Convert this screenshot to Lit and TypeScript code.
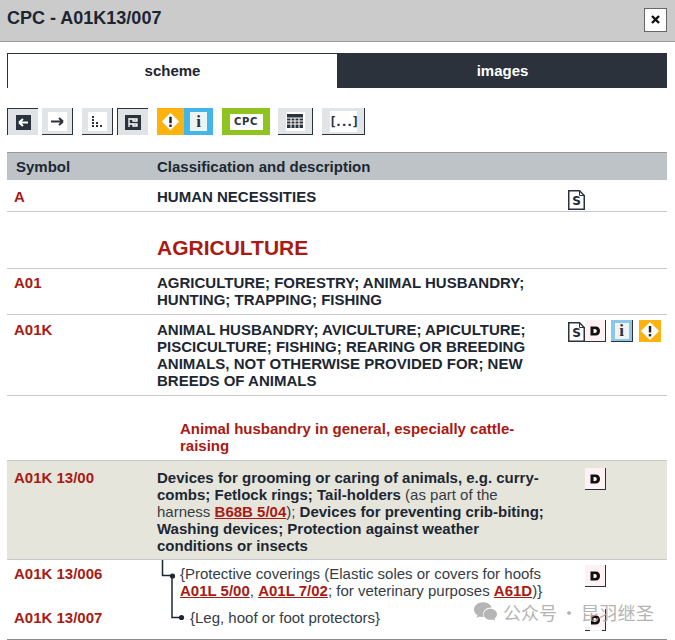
import { LitElement, html, css, svg } from "lit";
import { customElement } from "lit/decorators.js";

const docIcon = (letter: string) => html`<span class="doc"><svg class="docbg" width="17" height="20" viewBox="0 0 17 20"><path d="M.75.75H11.500L16.250 5.500V19.250H.75Z" fill="#fff" stroke="#2b323c" stroke-width="1.500"/><path d="M11.500 1V5.500H16" fill="none" stroke="#2b323c"/></svg><b>${letter}</b></span>`;
const dIcon = () => html`<span class="dbtn"><svg width="12" height="12" viewBox="0 0 12 12"><path fill-rule="evenodd" d="M1.500 1.500H6.500C9.500 1.500 11 3.500 11 6S9.500 10.500 6.500 10.500H1.500ZM4.500 4V8H6C7.300 8 7.800 7 7.800 6S7.300 4 6 4Z" fill="#111"/></svg></span>`;
const infoIcon = () => html`<span class="mini info"><span class="mini-in">i</span></span>`;
const warnIcon = () => html`<span class="mini warn"><svg width="22" height="22" viewBox="0 0 22 22"><path d="M11 2L20 11L11 20L2 11Z" fill="#fff"/><rect x="9.800" y="6" width="2.400" height="6.500" fill="#222"/><rect x="9.800" y="14" width="2.400" height="2.400" fill="#222"/></svg></span>`;

@customElement("app-root")
export class AppRoot extends LitElement {
  static styles = css`
    :host { display: block; width: 675px; height: 640px; overflow: hidden; position: relative; background: #fff;
      font-family: "Liberation Sans", Arial, sans-serif; color: #1c2733; }
    .head { height: 41px; background: #cbcbcb; border-bottom: 1px solid #9a9a9a;
      display: flex; align-items: center; justify-content: space-between; padding: 0 8px 0 7px; }
    .title { font-size: 18px; font-weight: bold; color: #1c2530; position: relative; top: -2px; }
    .close { width: 21px; height: 22px; background: #fff; border: 1px solid #666; display: flex; align-items: center;
      justify-content: center; position: relative; top: -1px; }
    .tabs { display: flex; margin: 11px 8px 0 7px; height: 35px; }
    .tab { flex: 1; display: flex; align-items: center; justify-content: center; font-size: 15px; font-weight: bold; }
    .tab.on { background: #fff; border: 1px solid #2b323c; border-bottom: 0; color: #1c2530; padding-bottom: 2px; }
    .tab.off { background: #2b323c; color: #fff; }
    .tools { display: flex; margin: 20px 0 0 7px; height: 27px; }
    .btn { box-sizing: border-box; height: 27px; background: #e2e5e8; display: flex; align-items: center; justify-content: center;
      border-right: 1px solid #2b323c; border-bottom: 1px solid #2b323c; }
    .btn.active { border: 0; border-top: 1px solid #2b323c; border-left: 1px solid #2b323c; background: #dfe3e6; }
    .w31 { width: 31px; }
    .m4 { margin-left: 4px; } .m9 { margin-left: 9px; } .m8 { margin-left: 8px; }
    .plate { width: 19px; height: 19px; background: #fff; display: flex; align-items: center; justify-content: center; }
    .pair { display: flex; width: 56px; height: 27px; }
    .pair .o { width: 27px; background: #fdb30f; display: flex; align-items: center; justify-content: center; }
    .pair .c { width: 29px; background: #42b6e6; display: flex; align-items: center; justify-content: center; }
    .ibox { width: 17px; height: 19px; background: #eef3f5; display: flex; align-items: center; justify-content: center;
      font: bold 17px "Liberation Serif", serif; color: #2b323c; }
    .cpc { width: 48px; height: 27px; background: #8fc31f; display: flex; align-items: center; justify-content: center; }
    .cpc span { background: #fff; width: 33px; height: 16px; display: flex; align-items: center; justify-content: center;
      font: bold 10px "DejaVu Sans", sans-serif; color: #2b323c; letter-spacing: .6px; }
    .w35 { width: 35px; } .w43 { width: 43px; }
    .dots { width: 27px; height: 21px; background: #fff; display: flex; align-items: center; justify-content: center;
      font: bold 13px "DejaVu Sans Mono", monospace; color: #2b323c; letter-spacing: -2.200px; }

    .table { margin: 17px 8px 0 7px; }
    .thead { display: grid; grid-template-columns: 150px 1fr; height: 27px; background: #bdc3c7; border-top: 1px solid #9a9a9a;
      align-items: center; font-size: 15px; font-weight: bold; color: #1c2733; }
    .thead span:first-child { padding-left: 9px; }
    .row { display: grid; grid-template-columns: 150px 411px 1fr; border-bottom: 1px solid #c9c9c9; font-size: 15px; line-height: 17px; box-sizing: border-box; }
    .sym { padding-left: 7px; color: #a81a12; font-weight: bold; }
    .desc { color: #1c2733; }
    .b { font-weight: bold; }
    .icons { display: flex; }
    .r-a { height: 32px; padding-top: 8px; }
    .r-a .icons { padding-top: 2px; }
    .r-agri { height: 57px; align-items: start; }
    .r-agri .desc { grid-column: 2 / 4; color: #a81a12; font-size: 21px; font-weight: bold; line-height: 24px; padding-top: 24px; }
    .r-a01 { height: 46px; padding-top: 5px; }
    .r-a01k { height: 81px; padding-top: 6px; }
    .r-a01k .icons { margin-top: -1px; align-items: flex-start; }
    .r-a01k .doc { margin-top: 2px; }
    .r-ah { height: 65px; display: block; padding: 24px 0 0 173px; color: #a81a12; font-weight: bold; font-size: 15px; }
    .r-1300 { height: 99px; padding-top: 8px; background: #e6e5dc; }
    .r-1300 .icons, .r-6 .icons, .r-7 .icons { padding-left: 17px; }
    .r-1300 .icons { margin-top: -1px; }
    .r-6 { height: 46px; padding-top: 5px; border-bottom: 0; }
    .r-7 { height: 34px; padding-top: 3px; border-bottom: 1px solid #8c8c8c; }
    .r-6 .desc { padding-left: 23px; }
    .r-7 .desc { padding-left: 33px; }
    .normal { font-weight: normal; color: #363c44; }
    a { color: #a81a12; font-weight: bold; text-decoration: underline; }

    .doc { position: relative; width: 17px; height: 20px; display: flex; align-items: center; justify-content: center;
      font: bold 12px "DejaVu Sans", sans-serif; color: #1c2733; }
    .docbg { position: absolute; left: 0; top: 0; }
    .doc b { position: relative; top: 1px; }
    .dbtn { box-sizing: border-box; width: 21px; height: 22px; background: #fdf1f4; border-right: 1px solid #2b323c; border-bottom: 1px solid #2b323c;
      display: flex; align-items: center; justify-content: center; }
    .mini { box-sizing: border-box; width: 22px; height: 22px; display: flex; align-items: center; justify-content: center; margin-left: 5px; }
    .mini.info { background: #8dc6e6; border-right: 1px solid #2b323c; border-bottom: 1px solid #2b323c; }
    .mini-in { width: 14px; height: 16px; background: #eef3f5; font: bold 17px "Liberation Serif", serif; color: #2b323c; display: flex; align-items: center; justify-content: center; }
    .mini.warn { background: #fdb30f; margin-left: 6px; }
    .lines { position: absolute; left: 155px; top: 560px; }
    .wash { position: absolute; background: rgba(255,255,255,.92); }
    .wash.w1 { left: 584px; top: 606px; width: 7px; height: 21px; }
    .wash.w2 { left: 590px; top: 606px; width: 15px; height: 7px; }
    .wash.w3 { left: 590px; top: 627px; width: 12px; height: 5px; }
    .mark { position: absolute; left: 474px; top: 601px; height: 22px; display: flex; align-items: center; font-size: 18px; line-height: 18px;
      color: rgba(165,165,165,.85); font-family: "Noto Sans CJK SC", sans-serif; white-space: nowrap; }
    .mark svg { margin-right: 6px; }
    .mark .dot { width: 24px; text-align: center; }
    .mark .name { letter-spacing: .3px; }
  `;

  render() {
    const dline = svg`<path d="M7.500 0V15.500H17M17 15.500V57.500H26" fill="none" stroke="#1c2733" stroke-width="1.500"/><circle cx="17.500" cy="16" r="2.600" fill="#1c2733"/><circle cx="26.500" cy="57.500" r="2.600" fill="#1c2733"/>`;
    return html`
      <div class="head">
        <div class="title">CPC - A01K13/007</div>
        <div class="close"><svg width="11" height="11" viewBox="0 0 11 11"><path d="M2 2L9 9M9 2L2 9" stroke="#111" stroke-width="2.400"/></svg></div>
      </div>
      <div class="tabs">
        <div class="tab on">scheme</div>
        <div class="tab off">images</div>
      </div>
      <div class="tools">
        <div class="btn active w31"><svg width="15" height="15" viewBox="0 0 15 15"><rect width="15" height="15" fill="#2b323c"/><path d="M3 7.500H12M3 7.500L7 4M3 7.500L7 11" stroke="#fff" stroke-width="2" fill="none"/></svg></div>
        <div class="btn w31 m4"><div class="plate"><svg width="15" height="11" viewBox="0 0 15 11"><path d="M1 5.500H13M13 5.500L9 2M13 5.500L9 9" stroke="#2b323c" stroke-width="2" fill="none"/></svg></div></div>
        <div class="btn w31 m9"><div class="plate"><svg width="13" height="11" viewBox="0 0 13 11" fill="#2b323c"><rect x="1" y="0" width="2" height="2"/><rect x="1" y="3" width="2" height="2"/><rect x="1" y="6" width="2" height="2"/><rect x="1" y="9" width="2" height="2"/><rect x="5" y="6" width="2" height="2"/><rect x="5" y="9" width="2" height="2"/><rect x="9" y="9" width="2" height="2"/></svg></div></div>
        <div class="btn active w31 m4"><svg width="16" height="15" viewBox="0 0 16 15"><rect width="16" height="15" fill="#2b323c"/><path d="M4 3V12M4 4H8V6H12V4H8M4 9H8V11H12V9H8" stroke="#fff" stroke-width="1.300" fill="none"/></svg></div>
        <div class="pair m9">
          <div class="o"><svg width="19" height="19" viewBox="0 0 22 22"><path d="M11 1L21 11L11 21L1 11Z" fill="#fff"/><rect x="9.600" y="5.500" width="2.800" height="7.500" fill="#222"/><rect x="9.600" y="14.500" width="2.800" height="2.800" fill="#222"/></svg></div>
          <div class="c"><div class="ibox">i</div></div>
        </div>
        <div class="cpc m9"><span>CPC</span></div>
        <div class="btn w35 m8"><div class="plate"><svg width="16" height="14" viewBox="0 0 16 14"><rect width="16" height="14" fill="#2b323c"/><path d="M0 4H16M0 7H16M0 10H16M4 4V14M8 4V14M12 4V14" stroke="#fff" stroke-width="1" fill="none"/></svg></div></div>
        <div class="btn w43 m9"><div class="dots">[...]</div></div>
      </div>
      <div class="table">
        <div class="thead"><span>Symbol</span><span>Classification and description</span></div>
        <div class="row r-a"><div class="sym">A</div><div class="desc b">HUMAN NECESSITIES</div><div class="icons">${docIcon("S")}</div></div>
        <div class="row r-agri"><div></div><div class="desc">AGRICULTURE</div></div>
        <div class="row r-a01"><div class="sym">A01</div><div class="desc b">AGRICULTURE; FORESTRY; ANIMAL HUSBANDRY;<br>HUNTING; TRAPPING; FISHING</div><div></div></div>
        <div class="row r-a01k"><div class="sym">A01K</div><div class="desc b">ANIMAL HUSBANDRY; AVICULTURE; APICULTURE;<br>PISCICULTURE; FISHING; REARING OR BREEDING<br>ANIMALS, NOT OTHERWISE PROVIDED FOR; NEW<br>BREEDS OF ANIMALS</div><div class="icons">${docIcon("S")}${dIcon()}${infoIcon()}${warnIcon()}</div></div>
        <div class="row r-ah">Animal husbandry in general, especially cattle-<br>raising</div>
        <div class="row r-1300"><div class="sym">A01K 13/00</div><div class="desc b">Devices for grooming or caring of animals, e.g. curry-<br>combs; Fetlock rings; Tail-holders <span class="normal">(as part of the<br>harness <a>B68B 5/04</a>);</span> Devices for preventing crib-biting;<br>Washing devices; Protection against weather<br>conditions or insects</div><div class="icons">${dIcon()}</div></div>
        <div class="row r-6"><div class="sym">A01K 13/006</div><div class="desc normal">{Protective coverings (Elastic soles or covers for hoofs<br><a>A01L 5/00</a>, <a>A01L 7/02</a>; for veterinary purposes <a>A61D</a>)}</div><div class="icons">${dIcon()}</div></div>
        <div class="row r-7"><div class="sym">A01K 13/007</div><div class="desc normal">{Leg, hoof or foot protectors}</div><div class="icons">${dIcon()}</div></div>
      </div>
      <svg class="lines" width="40" height="70">${dline}</svg>
      <div class="wash w1"></div><div class="wash w2"></div><div class="wash w3"></div>
      <div class="mark">
        <svg width="23" height="22" viewBox="0 0 26 24"><path d="M10 1C4.500 1 0 4.700 0 9.300C0 12 1.500 14.300 3.900 15.800L3 18.800L6.400 17C7.500 17.400 8.700 17.600 10 17.600C10.300 17.600 10.600 17.600 10.900 17.500C10.500 16.500 10.300 15.500 10.300 14.500C10.300 10.300 14.300 7 19.200 7C19.500 7 19.800 7 20 7C19 3.500 14.900 1 10 1Z" fill="#b5b5b5"/><path d="M26 14.500C26 11 22.700 8.200 18.500 8.200S11 11 11 14.500S14.300 20.800 18.500 20.800C19.400 20.800 20.300 20.700 21.100 20.400L24 22L23.300 19.300C25 18.100 26 16.400 26 14.500Z" fill="#b5b5b5"/></svg>
        <span>公众号</span><span class="dot">·</span><span class="name">昆羽继圣</span>
      </div>
    `;
  }
}
